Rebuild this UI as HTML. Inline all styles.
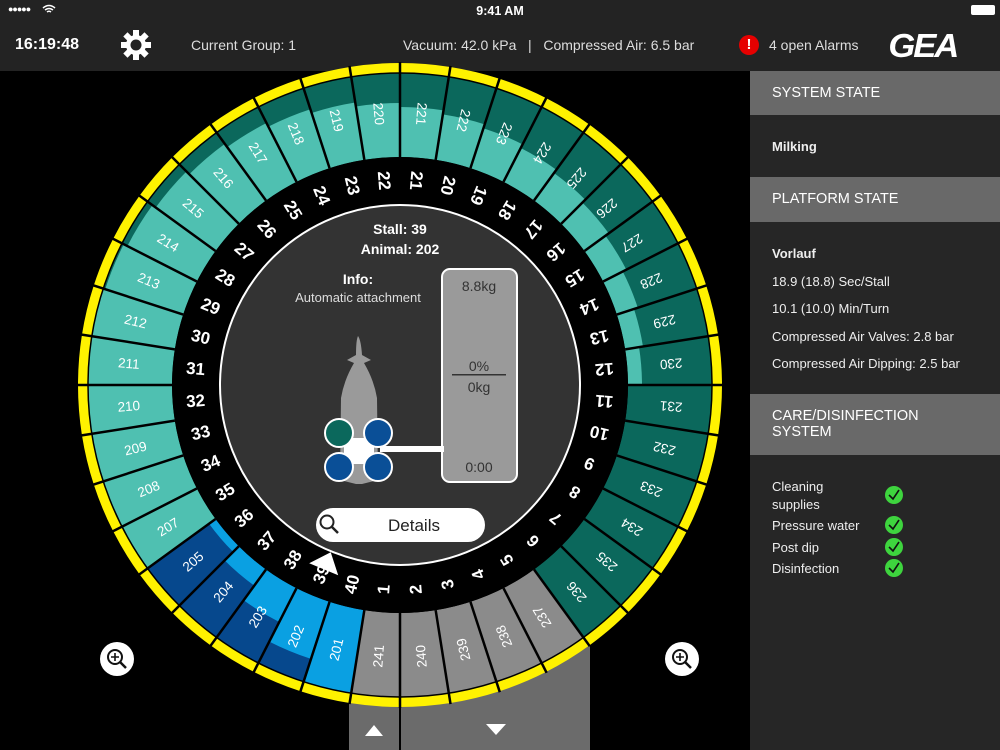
<!DOCTYPE html>
<html><head><meta charset="utf-8">
<style>
*{margin:0;padding:0;box-sizing:border-box}
body{width:1000px;height:750px;overflow:hidden;background:#000;font-family:"Liberation Sans",sans-serif;color:#fff;position:relative}
.top{position:absolute;left:0;top:0;width:1000px;height:71px;background:#232323}
.abs{position:absolute;white-space:nowrap}
.panel{position:absolute;left:750px;top:71px;width:250px;height:679px;background:#262626}
.hdr{position:absolute;left:0;width:250px;background:#696969;color:#fff;font-size:14.5px;padding-left:22px}
.pt{position:absolute;left:22px;font-size:13px;color:#eee;white-space:nowrap}
.chk{position:absolute;left:135px;width:18px;height:18px;border-radius:50%;background:#3ed43e}
</style></head><body>
<div class="top">
  <div class="abs" style="left:8px;top:4px;font-size:9px;letter-spacing:-1px">●●●●●</div>
  <svg class="abs" style="left:42px;top:4px" width="14" height="10"><path d="M1 4 Q7 -1 13 4 M3 6 Q7 3 11 6 M5 8 Q7 6.5 9 8" stroke="#fff" stroke-width="1.5" fill="none"/></svg>
  <div class="abs" style="left:0;width:1000px;text-align:center;top:4px;font-size:12.5px;font-weight:bold">9:41 AM</div>
  <div class="abs" style="left:971px;top:5px;width:24px;height:10px;border-radius:2px;background:#fff"></div>
  <div class="abs" style="left:15px;top:36px;font-size:16px;font-weight:bold">16:19:48</div>
  <svg class="abs" style="left:120px;top:29px" width="32" height="32" viewBox="-16 -16 32 32">
    <g fill="#fff"><circle r="10"/>
    <g id="t"><rect x="-3" y="-15" width="6" height="7"/></g>
    <use href="#t" transform="rotate(45)"/><use href="#t" transform="rotate(90)"/><use href="#t" transform="rotate(135)"/><use href="#t" transform="rotate(180)"/><use href="#t" transform="rotate(225)"/><use href="#t" transform="rotate(270)"/><use href="#t" transform="rotate(315)"/></g>
    <circle r="5.5" fill="#232323"/></svg>
  <div class="abs" style="left:191px;top:37px;font-size:14px;color:#ddd">Current Group: 1</div>
  <div class="abs" style="left:403px;top:37px;font-size:14px;color:#ddd">Vacuum: 42.0 kPa &nbsp;&nbsp;| &nbsp;&nbsp;Compressed Air: 6.5 bar</div>
  <div class="abs" style="left:739px;top:35px;width:20px;height:20px;border-radius:50%;background:#e60000;text-align:center;font-weight:bold;font-size:15px;line-height:20px">!</div>
  <div class="abs" style="left:769px;top:37px;font-size:14px;color:#ddd">4 open Alarms</div>
  <div class="abs" style="left:890px;top:27px;font-size:33px;font-weight:bold;font-style:italic;letter-spacing:-2px;transform:scaleX(1.05)">GEA</div>
</div>

<svg id="ring" class="abs" style="left:0;top:0" width="750" height="750" viewBox="0 0 750 750"></svg>

<div class="panel">
  <div class="hdr" style="top:0;height:44px;line-height:44px">SYSTEM STATE</div>
  <div class="pt" style="top:68px;font-weight:bold">Milking</div>
  <div class="hdr" style="top:106px;height:45px;line-height:45px">PLATFORM STATE</div>
  <div class="pt" style="top:175px;font-weight:bold">Vorlauf</div>
  <div class="pt" style="top:203px">18.9 (18.8) Sec/Stall</div>
  <div class="pt" style="top:230px">10.1 (10.0) Min/Turn</div>
  <div class="pt" style="top:258px">Compressed Air Valves: 2.8 bar</div>
  <div class="pt" style="top:285px">Compressed Air Dipping: 2.5 bar</div>
  <div class="hdr" style="top:323px;height:61px;padding-top:14px;line-height:16px">CARE/DISINFECTION<br>SYSTEM</div>
  <div class="pt" style="top:407px;line-height:18px">Cleaning<br>supplies</div>
  <div class="chk" style="top:415px"></div>
  <div class="pt" style="top:447px">Pressure water</div><div class="chk" style="top:445px"></div>
  <div class="pt" style="top:469px">Post dip</div><div class="chk" style="top:467px"></div>
  <div class="pt" style="top:490px">Disinfection</div><div class="chk" style="top:488px"></div>
</div>
<svg class="abs" style="left:885px;top:486px" width="18" height="100"><g stroke="#111" stroke-width="1.6" fill="none"><path d="M4 9 L8 13 L14 4"/><path d="M4 39 L8 43 L14 34"/><path d="M4 61 L8 65 L14 56"/><path d="M4 82 L8 86 L14 77"/></g></svg>

<script>
var s=document.getElementById('ring'),cx=400,cy=385,h='';
function P(r,a){a=a*Math.PI/180;return [cx+r*Math.sin(a),cy-r*Math.cos(a)];}
function sec(r1,r2,a1,a2,f){var p1=P(r2,a1),p2=P(r2,a2),p3=P(r1,a2),p4=P(r1,a1);
return '<path d="M'+p1+' A'+r2+' '+r2+' 0 0 1 '+p2+' L'+p3+' A'+r1+' '+r1+' 0 0 0 '+p4+'Z" fill="'+f+'"/>';}
h+='<rect x="0" y="71" width="750" height="679" fill="#000"/>';
h+='<rect x="349" y="630" width="241" height="130" fill="#6b6b6b"/><rect x="399" y="630" width="2" height="130" fill="#000"/>';
h+='<path d="M365 736 L383 736 L374 725Z" fill="#fff"/><path d="M486 724 L506 724 L496 735Z" fill="#fff"/>';
var outer=[];for(var i=0;i<=20;i++)outer.push(221+i);for(i=201;i<=205;i++)outer.push(i);for(i=207;i<=220;i++)outer.push(i);
var LT='#4fc0b1',DT='#0b685c',LB='#0aa0e2',DB='#06488d',GR='#8b8b8b',Y='#fff200';
var blue={21:312,22:288,23:266,24:248,25:236};
for(i=0;i<40;i++){var a1=i*9,a2=a1+9;
 var base,light,rl=228;
 if(i>=16&&i<=20){base=GR;light=GR;rl=312;}
 else if(i>=21&&i<=25){base=DB;light=LB;rl=blue[i];}
 else if(i>=26&&i<=29){base=DT;light=LT;rl=312;}
 else {var k=(i-30+40)%40; base=DT;light=LT; rl=(k<=19)?Math.min(312,318-4*k):228;}
 h+=sec(228,312,a1,a2,base);
 if(rl>228)h+=sec(228,rl,a1,a2,light);
 h+=sec(312,322,a1,a2,Y);}
h+='<circle cx="400" cy="385" r="312" fill="none" stroke="#000" stroke-width="1.5"/>';
for(i=0;i<40;i++){var p=P(228,i*9),q=P(323,i*9);h+='<line x1="'+p[0]+'" y1="'+p[1]+'" x2="'+q[0]+'" y2="'+q[1]+'" stroke="#000" stroke-width="2.5"/>';}
h+='<circle cx="400" cy="385" r="228" fill="#000"/><circle cx="400" cy="385" r="180" fill="#333" stroke="#fff" stroke-width="2"/>';
for(i=0;i<40;i++){var a=i*9+4.5,rot=a+90;
 var o=P(272,a);h+='<text x="'+o[0]+'" y="'+o[1]+'" transform="rotate('+rot+' '+o[0]+' '+o[1]+')" text-anchor="middle" dominant-baseline="central" font-size="13.5" fill="#fff">'+outer[i]+'</text>';
 var n=(21-i+40)%40;if(n==0)n=40;
 var m=P(205,a);h+='<text x="'+m[0]+'" y="'+m[1]+'" transform="rotate('+rot+' '+m[0]+' '+m[1]+')" text-anchor="middle" dominant-baseline="central" font-size="17" font-weight="bold" fill="#fff">'+n+'</text>';}
var t1=P(181,202.5),t2=P(200,198),t3=P(200,207);h+='<path d="M'+t1+' L'+t2+' L'+t3+'Z" fill="#fff"/>';
h+='<text x="400" y="234" text-anchor="middle" font-size="14" font-weight="bold" fill="#fff">Stall: 39</text>';
h+='<text x="400" y="254" text-anchor="middle" font-size="14" font-weight="bold" fill="#fff">Animal: 202</text>';
h+='<text x="358" y="284" text-anchor="middle" font-size="14" font-weight="bold" fill="#fff">Info:</text>';
h+='<text x="358" y="302" text-anchor="middle" font-size="13" fill="#ddd">Automatic attachment</text>';
h+='<rect x="442" y="269" width="75" height="213" rx="8" fill="#9a9a9a" stroke="#fff" stroke-width="2"/>';
h+='<text x="479" y="291" text-anchor="middle" font-size="14" fill="#333">8.8kg</text>';
h+='<text x="479" y="371" text-anchor="middle" font-size="14" fill="#333">0%</text><rect x="452" y="374" width="54" height="1.5" fill="#333"/>';
h+='<text x="479" y="392" text-anchor="middle" font-size="14" fill="#333">0kg</text>';
h+='<text x="479" y="472" text-anchor="middle" font-size="14" fill="#333">0:00</text>';
h+='<path d="M358 336 Q361 340 362 355 L371 360 L364 363 Q374 380 377 398 L378 480 L362 484 L356 484 L340 480 L341 398 Q344 380 354 363 L347 360 L356 355 Q356 340 358 336Z" fill="#9a9a9a"/>';
h+='<rect x="344" y="438" width="30" height="26" fill="#fff"/><rect x="380" y="446" width="64" height="6" fill="#fff"/>';
h+='<circle cx="339" cy="433" r="14" fill="#0b685c" stroke="#fff" stroke-width="2"/><circle cx="378" cy="433" r="14" fill="#0a4f97" stroke="#fff" stroke-width="2"/>';
h+='<circle cx="339" cy="467" r="14" fill="#0a4f97" stroke="#fff" stroke-width="2"/><circle cx="378" cy="467" r="14" fill="#0a4f97" stroke="#fff" stroke-width="2"/>';
h+='<rect x="316" y="508" width="169" height="34" rx="17" fill="#fff"/>';
h+='<circle cx="327" cy="522" r="6.5" fill="none" stroke="#222" stroke-width="2"/><line x1="332" y1="527" x2="338" y2="533" stroke="#222" stroke-width="2.5"/>';
h+='<text x="414" y="531" text-anchor="middle" font-size="17" fill="#222">Details</text>';
[[117,659],[682,659]].forEach(function(c){h+='<circle cx="'+c[0]+'" cy="'+c[1]+'" r="17" fill="#fff"/><circle cx="'+(c[0]-2)+'" cy="'+(c[1]-2)+'" r="7" fill="none" stroke="#111" stroke-width="2"/><line x1="'+(c[0]+3)+'" y1="'+(c[1]+3)+'" x2="'+(c[0]+9)+'" y2="'+(c[1]+9)+'" stroke="#111" stroke-width="2.5"/><path d="M'+(c[0]-6)+' '+(c[1]-2)+' h8 M'+(c[0]-2)+' '+(c[1]-6)+' v8" stroke="#111" stroke-width="1.6"/>';});
s.innerHTML=h;
</script>
</body></html>
